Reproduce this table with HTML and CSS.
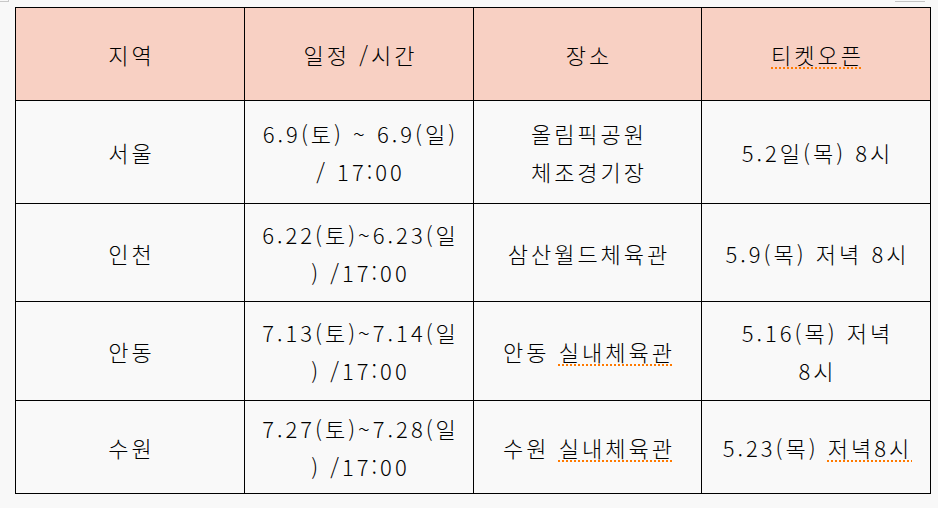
FILE: index.html
```html
<!DOCTYPE html>
<html lang="ko">
<head>
<meta charset="utf-8">
<title>공연 일정</title>
<link rel="stylesheet" href="styles.css">
</head>
<body>
<div class="topstrip">
  <span class="mark-left"></span>
  <span class="mark-right"></span>
</div>
<div class="sheet">
  <div class="grid">
    <div class="cell head"><span class="txt">지역</span></div>
    <div class="cell head"><span class="txt">일정 /시간</span></div>
    <div class="cell head"><span class="txt">장소</span></div>
    <div class="cell head"><span class="txt"><span class="spell">티켓오픈</span></span></div>

    <div class="cell"><span class="txt">서울</span></div>
    <div class="cell"><span class="txt">6.9(토) ~ 6.9(일)<br>/ 17:00</span></div>
    <div class="cell"><span class="txt">올림픽공원<br>체조경기장</span></div>
    <div class="cell"><span class="txt">5.2일(목) 8시</span></div>

    <div class="cell"><span class="txt">인천</span></div>
    <div class="cell"><span class="txt">6.22(토)~6.23(일<br>) /17:00</span></div>
    <div class="cell"><span class="txt">삼산월드체육관</span></div>
    <div class="cell"><span class="txt">5.9(목) 저녁 8시</span></div>

    <div class="cell"><span class="txt">안동</span></div>
    <div class="cell"><span class="txt">7.13(토)~7.14(일<br>) /17:00</span></div>
    <div class="cell"><span class="txt">안동 <span class="spell">실내체육관</span></span></div>
    <div class="cell"><span class="txt">5.16(목) 저녁<br>8시</span></div>

    <div class="cell"><span class="txt">수원</span></div>
    <div class="cell"><span class="txt">7.27(토)~7.28(일<br>) /17:00</span></div>
    <div class="cell"><span class="txt">수원 <span class="spell">실내체육관</span></span></div>
    <div class="cell"><span class="txt">5.23(목) <span class="spell">저녁8시</span></span></div>
  </div>
</div>
</body>
</html>
```

FILE: styles.css
```css
html, body {
  margin: 0;
  padding: 0;
  background: #f8f8f8;
}

body {
  width: 938px;
  height: 508px;
  overflow: hidden;
  font-family: "Noto Sans CJK KR", "Noto Sans", sans-serif;
  color: #000;
}

.topstrip {
  height: 7px;
  display: flex;
  justify-content: space-between;
  align-items: flex-start;
}

.mark-left {
  width: 9px;
  height: 2px;
  border-right: 1px solid #c8c8c8;
  border-bottom: 1px solid #c8c8c8;
  box-sizing: border-box;
}

.mark-right {
  width: 30px;
  height: 1px;
  margin-top: 1px;
  margin-right: 13px;
  background: #c4c4c4;
}

.sheet {
  padding-left: 15px;
}

.grid {
  display: grid;
  grid-template-columns: 229px 229px 228px 229px;
  grid-template-rows: 93px 103px 98px 99px 93px;
  width: 915px;
  border-left: 1px solid #000;
  border-top: 1px solid #000;
}

.cell {
  border-right: 1px solid #000;
  border-bottom: 1px solid #000;
  display: flex;
  align-items: center;
  justify-content: center;
  background: #f9f9f9;
}

.txt {
  display: block;
  text-align: center;
  white-space: nowrap;
  font-size: 22px;
  font-weight: 300;
  line-height: 38px;
  letter-spacing: 3px;
  padding-left: 3px;
}

.head {
  background: #f8d0c3;
}

.spell {
  text-decoration-line: underline;
  text-decoration-style: dotted;
  text-decoration-color: #ff7a00;
  text-decoration-thickness: 1.5px;
  text-underline-offset: 3px;
}
```
